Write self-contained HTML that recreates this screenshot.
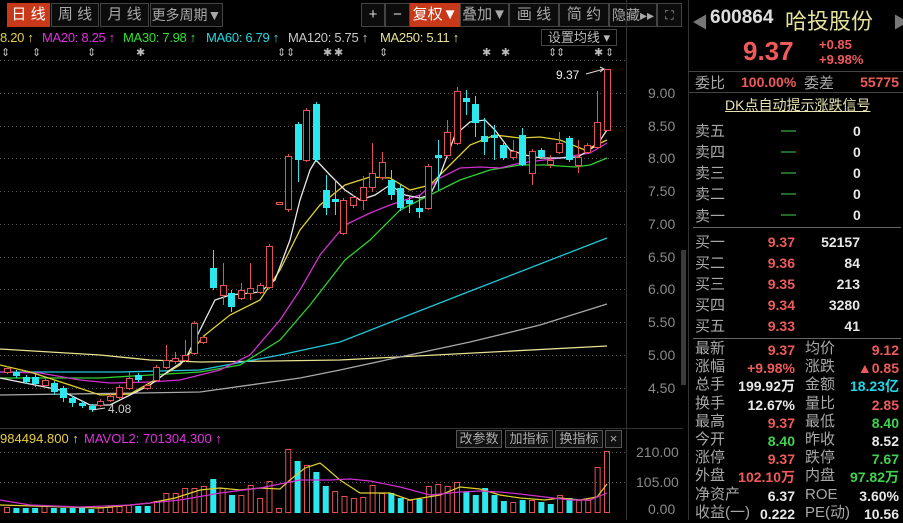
<!DOCTYPE html>
<html><head><meta charset="utf-8"><style>
*{margin:0;padding:0;box-sizing:border-box}
body{width:903px;height:520px;background:#000;overflow:hidden;position:relative;font-family:"Liberation Sans","Noto Sans CJK SC",sans-serif;color:#aaa}
.a{position:absolute;white-space:nowrap}
.tab{position:absolute;top:3px;height:24px;border:1px solid #444;background:#0c0c0c;color:#a8a8a8;font-size:15px;line-height:22px;text-align:center}
.tab.on{background:#c8391a;color:#fff;border-color:#c8391a}
.btn{position:absolute;top:430px;height:18px;border:1px solid #555;background:#111;color:#aaa;font-size:13px;line-height:16px;text-align:center}
.rp{position:absolute;left:688px;top:0;width:215px;height:520px;border-left:1px solid #333}
.r{color:#f05a5a}.g{color:#3fd24f}.w{color:#e8e8e8}.c{color:#1fd8e8}
.lb{position:absolute;left:6px;font-size:15px;color:#a8a8a8}
.v1{position:absolute;right:108px;font-size:14px;font-weight:bold}
.l2{position:absolute;left:116px;font-size:15px;color:#a8a8a8}
.v2{position:absolute;right:4px;font-size:14px;font-weight:bold}
.hl{position:absolute;left:0;width:215px;height:1px;background:#444}
</style></head><body>
<div class="tab on" style="left:7px;width:43px">日 线</div>
<div class="tab" style="left:51px;width:48px">周 线</div>
<div class="tab" style="left:100px;width:49px">月 线</div>
<div class="tab" style="left:150px;width:73px;font-size:14px">更多周期▼</div>
<div class="tab" style="left:361px;width:24px;color:#ddd">+</div>
<div class="tab" style="left:385px;width:25px;color:#ddd">−</div>
<div class="tab on" style="left:410px;width:50px">复权▼</div>
<div class="tab" style="left:460px;width:49px">叠加▼</div>
<div class="tab" style="left:509px;width:50px">画 线</div>
<div class="tab" style="left:559px;width:50px">简 约</div>
<div class="tab" style="left:609px;width:48px;font-size:14px">隐藏▸▸</div>
<div class="tab" style="left:657px;width:25px;font-size:12px">⛶</div>

<div class="a" style="left:0;top:30px;font-size:13px;letter-spacing:-0.3px">
<span style="color:#e8d040">8.20 ↑</span>
<span style="color:#e030e0;position:absolute;left:42px">MA20: 8.25 ↑</span>
<span style="color:#30e030;position:absolute;left:123px">MA30: 7.98 ↑</span>
<span style="color:#20d8e0;position:absolute;left:206px">MA60: 6.79 ↑</span>
<span style="color:#c8c8c8;position:absolute;left:288px">MA120: 5.75 ↑</span>
<span style="color:#e8e090;position:absolute;left:380px">MA250: 5.11 ↑</span>
</div>
<div class="a" style="left:541px;top:29px;width:76px;height:17px;border:1px solid #444;font-size:13px;line-height:15px;color:#bbb;text-align:center">设置均线 ▾</div>

<svg class="a" style="left:0;top:0" width="690" height="520" id="sv">
<g stroke="#555" stroke-dasharray="1 3" stroke-width="1">
<line x1="0" y1="60.5" x2="625" y2="60.5"/><line x1="0" y1="93.5" x2="625" y2="93.5"/><line x1="0" y1="126.5" x2="625" y2="126.5"/><line x1="0" y1="158.5" x2="625" y2="158.5"/><line x1="0" y1="191.5" x2="625" y2="191.5"/><line x1="0" y1="224.5" x2="625" y2="224.5"/><line x1="0" y1="257.5" x2="625" y2="257.5"/><line x1="0" y1="289.5" x2="625" y2="289.5"/><line x1="0" y1="322.5" x2="625" y2="322.5"/><line x1="0" y1="355.5" x2="625" y2="355.5"/><line x1="0" y1="388.5" x2="625" y2="388.5"/>
<line x1="0" y1="452.5" x2="625" y2="452.5"/><line x1="0" y1="482.5" x2="625" y2="482.5"/>
</g>
<line x1="626.5" y1="0" x2="626.5" y2="520" stroke="#333"/>
<line x1="0" y1="428.5" x2="683" y2="428.5" stroke="#333"/>
<rect x="681" y="250" width="5" height="135" fill="#3a3a3a"/>
<g font-size="14" fill="#8a8a8a" font-family="Liberation Sans">
<text x="648" y="98">9.00</text><text x="648" y="131">8.50</text><text x="648" y="163">8.00</text><text x="648" y="196">7.50</text><text x="648" y="229">7.00</text><text x="648" y="262">6.50</text><text x="648" y="294">6.00</text><text x="648" y="327">5.50</text><text x="648" y="360">5.00</text><text x="648" y="393">4.50</text>
<text x="636" y="457">210.00</text><text x="636" y="487">105.00</text><text x="648" y="514">0.00</text>
</g>
<g font-size="11" fill="#bbb" font-family="DejaVu Sans" id="stars"></g>
<g id="ma"></g><g id="cd"></g><g id="vol"></g>
<text x="556" y="79" font-size="12" fill="#eee">9.37</text>
<path d="M586 74 L604 69 M600 67 L604 69 L600 72" stroke="#ddd" fill="none"/>
<text x="108" y="413" font-size="12" fill="#ccc">4.08</text>
<path d="M105 408 L92 410" stroke="#ddd"/>
</svg>

<div class="a" style="left:0;top:431px;font-size:13px;color:#e8d040">984494.800 ↑</div>
<div class="a" style="left:84px;top:431px;font-size:13px;color:#e030e0">MAVOL2: 701304.300 ↑</div>
<div class="btn" style="left:456px;width:46px">改参数</div>
<div class="btn" style="left:505px;width:48px">加指标</div>
<div class="btn" style="left:555px;width:48px">换指标</div>
<div class="btn" style="left:605px;width:17px">×</div>

<div class="rp">
<div class="a" style="left:3px;top:9px;font-size:16px;color:#777">◀</div>
<div class="a" style="left:21px;top:7px;font-size:19px;font-weight:bold;color:#ddd">600864</div>
<div class="a" style="left:96px;top:4px;font-size:22px;color:#e6e29a">哈投股份</div>
<div class="a" style="left:204px;top:9px;font-size:16px;color:#777">▶</div>
<div class="a r" style="left:54px;top:36px;font-size:26px;font-weight:bold">9.37</div>
<div class="a r" style="left:130px;top:37px;font-size:13px;font-weight:bold">+0.85</div>
<div class="a r" style="left:130px;top:52px;font-size:13px;font-weight:bold">+9.98%</div>
<div class="hl" style="top:71px"></div>
<div class="lb" style="top:72px">委比</div>
<div class="a r" style="left:52px;top:74px;font-size:14px;font-weight:bold">100.00%</div>
<div class="l2" style="left:115px;top:72px">委差</div>
<div class="v2 r" style="top:74px">55775</div>
<div class="hl" style="top:92px"></div>
<div class="a" style="left:36px;top:95px;font-size:14px;color:#e8e4b0;text-decoration:underline">DK点自动提示涨跌信号</div>
<div class="lb" style="top:120px">卖五</div><div class="lb" style="top:141px">卖四</div><div class="lb" style="top:162px">卖三</div><div class="lb" style="top:183px">卖二</div><div class="lb" style="top:205px">卖一</div>
<div class="a g" style="left:92px;top:120px;font-size:15px;line-height:21px">—<br>—<br>—<br>—<br>—</div>
<div class="a w" style="left:164px;top:121px;font-size:14px;font-weight:bold;line-height:21px">0<br>0<br>0<br>0<br>0</div>
<div class="hl" style="top:227px;left:4px;width:208px;background:#666"></div>
<div class="lb" style="top:231px">买一</div><div class="lb" style="top:252px">买二</div><div class="lb" style="top:273px">买三</div><div class="lb" style="top:294px">买四</div><div class="lb" style="top:315px">买五</div>
<div class="a r" style="right:108px;top:232px;font-size:14px;font-weight:bold;line-height:21px;text-align:right">9.37<br>9.36<br>9.35<br>9.34<br>9.33</div>
<div class="a w" style="right:43px;top:232px;font-size:14px;font-weight:bold;line-height:21px;text-align:right">52157<br>84<br>213<br>3280<br>41</div>
<div class="hl" style="top:338px;left:4px;width:208px;background:#666"></div>
<div class="a" style="left:6px;top:340px;font-size:15px;line-height:18.2px;color:#a8a8a8">最新<br>涨幅<br>总手<br>换手<br>最高<br>今开<br>涨停<br>外盘<br>净资产<br>收益(一)</div>
<div class="a" style="left:116px;top:340px;font-size:15px;line-height:18.2px;color:#a8a8a8">均价<br>涨跌<br>金额<br>量比<br>最低<br>昨收<br>跌停<br>内盘<br>ROE<br>PE(动)</div>
<div class="a" style="right:108px;top:341px;font-size:14px;font-weight:bold;line-height:18.2px;text-align:right"><span class="r">9.37</span><br><span class="r">+9.98%</span><br><span class="w">199.92万</span><br><span class="w">12.67%</span><br><span class="r">9.37</span><br><span class="g">8.40</span><br><span class="r">9.37</span><br><span class="r">102.10万</span><br><span class="w">6.37</span><br><span class="w">0.222</span></div>
<div class="a" style="right:4px;top:341px;font-size:14px;font-weight:bold;line-height:18.2px;text-align:right"><span class="r">9.12</span><br><span class="r">▲0.85</span><br><span class="c">18.23亿</span><br><span class="r">2.85</span><br><span class="g">8.40</span><br><span class="w">8.52</span><br><span class="g">7.67</span><br><span class="g">97.82万</span><br><span class="w">3.60%</span><br><span class="w">10.56</span></div>
</div>

<script>
var NS="http://www.w3.org/2000/svg";
function el(p,t,a){var e=document.createElementNS(NS,t);for(var k in a)e.setAttribute(k,a[k]);document.getElementById(p).appendChild(e);return e}
var R="#e25252",C="#2ae8ee";
var cd=[[7,'r',368,372,366,374],[16,'c',372,376,370,378],[26,'c',377,382,375,384],[35,'c',377,384,374,387],[45,'r',380,385,378,387],[54,'c',383,392,381,395],[63,'c',388,398,386,402],[72,'c',398,403,396,407],[82,'c',403,406,401,408],[92,'c',406,410,404,412],[100,'r',401,405,399,407],[110,'r',396,400,394,402],[119,'r',387,397,385,399],[129,'r',378,388,372,390],[138,'c',375,380,373,382],[147,'r',385,388,383,390],[156,'r',367,380,365,382],[166,'r',360,367,345,369],[175,'r',358,361,352,364],[185,'r',355,360,340,362],[194,'r',323,353,321,355],[203,'r',337,342,335,344],[213,'c',268,288,250,290],[223,'r',285,295,263,305],[231,'c',293,307,290,312],[241,'r',290,298,283,300],[250,'r',288,293,263,300],[260,'r',285,292,283,294],[269,'r',246,287,244,289],[279,'r',202,204,202,204],[288,'r',156,209,154,212],[298,'c',124,160,122,182],[306,'r',110,160,108,162],[316,'c',104,160,102,162],[326,'c',190,208,175,215],[335,'c',199,202,180,215],[343,'r',200,233,198,235],[353,'r',197,205,195,208],[363,'r',187,200,176,210],[372,'r',173,187,143,192],[382,'r',162,177,152,180],[391,'c',180,195,170,200],[400,'c',188,208,185,211],[409,'c',200,204,195,213],[419,'c',208,212,195,218],[428,'r',166,208,164,210],[438,'c',155,158,140,190],[447,'r',132,155,120,158],[457,'r',91,143,87,145],[466,'c',98,102,90,115],[475,'c',104,123,96,137],[484,'c',136,142,118,155],[494,'c',135,138,125,160],[503,'c',145,158,143,160],[513,'r',151,157,140,160],[522,'c',135,165,128,166],[532,'r',151,173,149,185],[541,'c',150,157,148,159],[550,'r',160,164,155,168],[559,'r',143,152,132,154],[569,'c',138,160,136,162],[578,'r',157,165,140,173],[587,'r',145,152,143,154],[597,'r',122,147,91,149],[607,'r',69,130,69,131]];
var ma={"#e8e090":[[0,349],[100,355],[150,360],[200,362],[340,360],[607,346]],
"#a8a8a8":[[0,395],[140,393],[200,392],[300,378],[340,370],[400,357],[470,342],[540,325],[607,304]],
"#20c8d8":[[0,372],[120,372],[200,370],[280,355],[340,342],[473,290],[607,238]],
"#30d030":[[0,378],[100,378],[150,375],[200,372],[240,365],[280,340],[310,305],[345,260],[370,240],[400,210],[430,195],[460,180],[490,170],[520,165],[545,165],[575,167],[590,165],[607,158]],
"#d030d0":[[0,372],[40,373],[80,380],[110,383],[150,382],[180,380],[220,370],[250,355],[280,320],[300,290],[320,255],[345,225],[370,213],[390,205],[420,195],[440,178],[460,168],[480,167],[500,168],[520,163],[560,158],[590,153],[607,143]],
"#e0d030":[[0,365],[30,372],[70,385],[100,395],[130,394],[155,380],[180,365],[205,335],[230,315],[260,300],[280,270],[300,230],[320,205],[345,185],[370,177],[390,178],[410,190],[430,185],[450,165],[470,145],[495,135],[520,138],[540,137],[560,140],[585,150],[607,140]],
"#e8e8e8":[[0,378],[60,390],[90,405],[110,405],[130,395],[150,385],[170,370],[185,360],[200,330],[215,300],[230,295],[260,292],[275,280],[290,240],[300,200],[310,170],[316,160],[330,175],[345,190],[360,200],[375,195],[390,185],[405,195],[420,198],[430,195],[440,175],[455,135],[470,122],[485,120],[495,130],[510,150],[525,155],[541,158],[560,158],[578,157],[597,145],[607,130]]};
for(var k in ma)el('ma','polyline',{points:ma[k].map(function(p){return p.join(',')}).join(' '),fill:'none',stroke:k,'stroke-width':1.3});
cd.forEach(function(d){var x=d[0],col=d[1]=='r'?R:C;
el('cd','line',{x1:x+.5,x2:x+.5,y1:d[4],y2:d[5],stroke:col});
var h=Math.max(1,d[3]-d[2]);
if(d[1]=='r')el('cd','rect',{x:x-2.5,y:d[2]+.5,width:6,height:h,fill:'#000',stroke:col});
else el('cd','rect',{x:x-3,y:d[2],width:7,height:h,fill:col});});
var vh=[6,5,5,5,7,5,5,5,5,4,6,6,7,8,7,7,12,20,20,25,25,27,34,25,18,18,28,15,32,5,64,52,48,41,27,22,17,15,16,28,20,20,15,13,14,27,29,27,31,21,18,25,18,12,11,13,13,11,9,18,15,13,13,46,62];
var vc=[0,1,1,1,0,1,1,1,1,1,0,0,0,0,1,1,0,0,0,0,0,0,1,0,1,0,0,0,0,0,0,1,0,1,1,0,0,0,0,0,0,1,1,0,1,0,0,0,0,1,1,1,1,1,0,1,0,1,1,0,1,0,0,0,0];
vh.forEach(function(h,i){var x=4+9.375*i;
if(vc[i])el('vol','rect',{x:x,y:513-h,width:6,height:h,fill:C});
else el('vol','rect',{x:x+.5,y:513-h+.5,width:5,height:h-1,fill:'none',stroke:R});});
var vy=[[0,505],[100,508],[150,503],[175,498],[200,490],[220,488],[240,490],[260,488],[280,489],[290,480],[305,468],[320,463],[325,467],[340,480],[360,493],[390,493],[410,500],[440,495],[460,487],[480,489],[500,495],[520,498],[545,500],[560,498],[580,500],[597,497],[607,484]];
var vm=[[0,500],[30,505],[80,507],[130,505],[180,500],[220,493],[260,488],[280,484],[300,480],[330,480],[350,479],[370,481],[400,487],[430,495],[460,492],[480,491],[500,492],[520,494],[545,497],[570,500],[590,500],[607,493]];
el('vol','polyline',{points:vy.map(function(p){return p.join(',')}).join(' '),fill:'none',stroke:'#e0d030','stroke-width':1.2});
el('vol','polyline',{points:vm.map(function(p){return p.join(',')}).join(' '),fill:'none',stroke:'#d030d0','stroke-width':1.2});
[4,35,90,139,280,289,326,337,382,485,504,551,559,597,608].forEach(function(x,i){var t=el('stars','text',{x:x-3,y:56});t.textContent=(i==3||i==6||i==7||i==9||i==10||i==13)?'✱':'⇕';});
</script>
</body></html>
